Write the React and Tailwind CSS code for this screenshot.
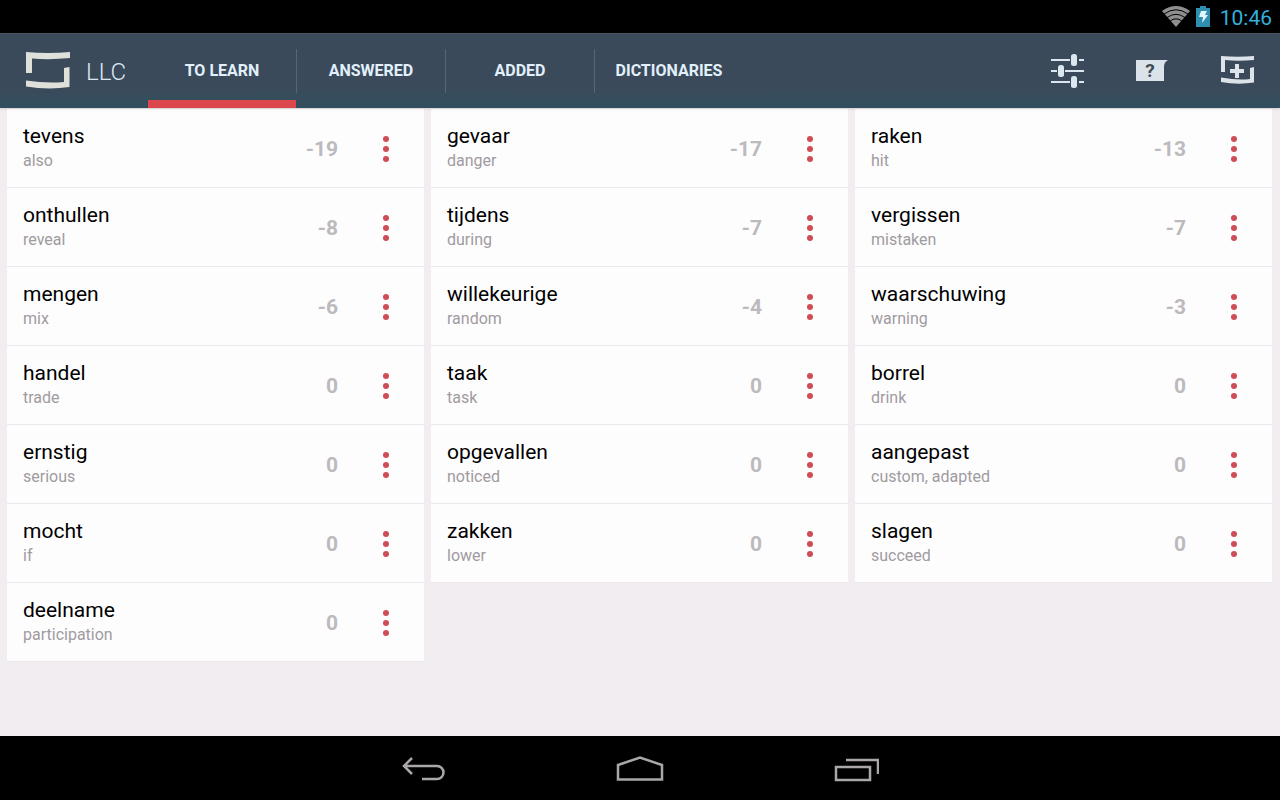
import React, { useState } from 'react';

const TABS = ['TO LEARN', 'ANSWERED', 'ADDED', 'DICTIONARIES'];

const WORDS = [
    { word: 'tevens', translation: 'also', score: -19 },
    { word: 'gevaar', translation: 'danger', score: -17 },
    { word: 'raken', translation: 'hit', score: -13 },
    { word: 'onthullen', translation: 'reveal', score: -8 },
    { word: 'tijdens', translation: 'during', score: -7 },
    { word: 'vergissen', translation: 'mistaken', score: -7 },
    { word: 'mengen', translation: 'mix', score: -6 },
    { word: 'willekeurige', translation: 'random', score: -4 },
    { word: 'waarschuwing', translation: 'warning', score: -3 },
    { word: 'handel', translation: 'trade', score: 0 },
    { word: 'taak', translation: 'task', score: 0 },
    { word: 'borrel', translation: 'drink', score: 0 },
    { word: 'ernstig', translation: 'serious', score: 0 },
    { word: 'opgevallen', translation: 'noticed', score: 0 },
    { word: 'aangepast', translation: 'custom, adapted', score: 0 },
    { word: 'mocht', translation: 'if', score: 0 },
    { word: 'zakken', translation: 'lower', score: 0 },
    { word: 'slagen', translation: 'succeed', score: 0 },
    { word: 'deelname', translation: 'participation', score: 0 }
];

function StatusBar() {
    return (
        <div className="flex h-[33px] items-center justify-end bg-black pr-2">
            <svg width="28" height="22" viewBox="0 0 28 22" aria-hidden="true">
                <path d="M0 5 Q14 -5 28 5 L14 21 Z" fill="#8f8f8f" />
                <path d="M2 8 Q14 -0.5 26 8 M5 11.6 Q14 5 23 11.6 M8 15 Q14 10.6 20 15" fill="none" stroke="#000" strokeWidth="1" />
            </svg>
            <svg className="ml-1.5" width="14" height="22" viewBox="0 0 14 22" aria-hidden="true">
                <path d="M4 0h6v2h4v19H0V2h4z" fill="#2f8fb0" />
                <path d="M5 5h6l-2 4h3l-6 8 1-6H3z" fill="#e4f6fc" />
            </svg>
            <span className="ml-2.5 pt-0.5 text-[21px] leading-8 text-[#35b0dc]">10:46</span>
        </div>
    );
}

function Logo() {
    return (
        <svg width="44" height="38" viewBox="0 0 44 38" aria-hidden="true">
            <path d="M0 0 Q22 2 44 0 V6 Q24 8 6 6.5 V21 H0 Z" fill="#e0e0da" />
            <path d="M38 16 L43.5 15 V35 Q22 38 0 34.5 V28.5 Q20 31.5 38 30 Z" fill="#e0e0da" />
        </svg>
    );
}

function SlidersIcon() {
    return (
        <svg width="34" height="34" viewBox="0 0 34 34" fill="#dce6ef" aria-hidden="true">
            <path d="M0 5h19v2H0zM28 5h5v2h-5zM0 16h6v2H0zM14 16h19v2H14zM0 27h19v2H0zM28 27h5v2h-5z" />
            <rect x="20" y="0" width="6" height="12" rx="2.5" />
            <rect x="7" y="11" width="6" height="12" rx="2.5" />
            <rect x="20" y="22" width="6" height="12" rx="2.5" />
        </svg>
    );
}

function HelpIcon() {
    return (
        <svg width="34" height="34" viewBox="0 -6 34 34" aria-hidden="true">
            <path d="M0 0h32q-4 2-4 7v14H0z" fill="#dae2ea" />
            <text x="14" y="17" textAnchor="middle" fontSize="19" fontWeight="700" fill="#3f4a55">?</text>
        </svg>
    );
}

function AddIcon() {
    return (
        <svg width="34" height="30" viewBox="0 0 34 30" fill="#dde4e9" aria-hidden="true">
            <path d="M0 0 Q17 1.5 33 0 V4 Q17 5.5 4 4 V16 H0 Z" />
            <path d="M29 12 L33 11 V26.5 Q17 29 0 26 V21.5 Q17 24.5 29 23 Z" />
            <path d="M14 8h4v5h5v4h-5v5h-4v-5H9v-4h5z" />
        </svg>
    );
}

function WordRow({ word, translation, score }) {
    return (
        <li className="flex h-[79px] items-center border-b border-[#eee6ed] bg-[#fefdfe] pl-4">
            <div className="min-w-0 flex-1 pb-0.5">
                <p className="text-[21px] leading-7 text-black">{word}</p>
                <p className="text-base leading-[22px] text-[#9f9b9f]">{translation}</p>
            </div>
            <span className="pt-1 text-[21px] font-bold text-[#bcbabd]">{score}</span>
            <button type="button" aria-label={`Options for ${word}`} className="ml-6 mr-3.5 flex h-12 w-12 items-center justify-center pt-0.5">
                <svg width="6" height="28" viewBox="0 0 6 28" fill="#cf4d55" aria-hidden="true">
                    <circle cx="3" cy="4" r="3" />
                    <circle cx="3" cy="14" r="3" />
                    <circle cx="3" cy="24" r="3" />
                </svg>
            </button>
        </li>
    );
}

export default function App() {
    const [activeTab, setActiveTab] = useState('TO LEARN');

    return (
        <div className="flex min-h-screen flex-col bg-[#f1edf1] font-[Roboto,sans-serif]">
            <StatusBar />

            <header className="z-10 flex h-[75px] items-stretch border-t border-[#4a5866] bg-linear-to-b from-[#3b4a5a] from-70% to-[#314f5e] shadow">
                <div className="flex w-[148px] items-center pl-[26px]">
                    <Logo />
                    <h1 className="ml-4 pt-0.5 text-2xl font-light text-[#dbe8f3]">LLC</h1>
                </div>
                <nav className="flex">
                    {TABS.map((tab, i) => (
                        <div key={tab} className="flex items-center">
                            {i > 0 && <span className="h-11 w-px bg-[#566675]" />}
                            <button
                                type="button"
                                onClick={() => setActiveTab(tab)}
                                className={`h-full w-[148px] border-b-8 pt-2 text-base font-bold text-[#e1f0fb] ${activeTab === tab ? 'border-[#db474c]' : 'border-transparent'}`}
                            >
                                {tab}
                            </button>
                        </div>
                    ))}
                </nav>
                <div className="ml-auto flex">
                    <button type="button" aria-label="Filter" className="flex w-[85px] items-center justify-center"><SlidersIcon /></button>
                    <button type="button" aria-label="Help" className="flex w-[85px] items-center justify-center"><HelpIcon /></button>
                    <button type="button" aria-label="Add word" className="flex w-[85px] items-center justify-center"><AddIcon /></button>
                </div>
            </header>

            <main className="flex-1 pl-[7px] pr-2 pt-px">
                <ul className="grid grid-cols-3 gap-x-[7px]">
                    {WORDS.map((item) => (
                        <WordRow key={item.word} {...item} />
                    ))}
                </ul>
            </main>

            <footer className="flex h-16 justify-center bg-black pt-1">
                <button type="button" aria-label="Back" className="flex w-[216px] items-center justify-center">
                    <svg width="44" height="28" viewBox="0 0 44 28" fill="none" stroke="#aaa6aa" strokeWidth="2.5" aria-hidden="true">
                        <path d="M10 2 L2 10 L10 18 M2 10 H35 a6.5 6.5 0 0 1 0 13 H20" />
                    </svg>
                </button>
                <button type="button" aria-label="Home" className="flex w-[216px] items-center justify-center">
                    <svg width="48" height="28" viewBox="0 0 48 28" fill="none" stroke="#aaa6aa" strokeWidth="2.5" aria-hidden="true">
                        <path d="M2 9 L24 1.5 L46 9 V23.5 H2 Z" />
                    </svg>
                </button>
                <button type="button" aria-label="Recent apps" className="flex w-[216px] items-center justify-center">
                    <svg width="46" height="28" viewBox="0 0 46 28" fill="none" stroke="#aaa6aa" strokeWidth="2.5" aria-hidden="true">
                        <path d="M3 11 H37 V24 H3 Z M13 4 H45 V18" />
                    </svg>
                </button>
            </footer>
        </div>
    );
}
